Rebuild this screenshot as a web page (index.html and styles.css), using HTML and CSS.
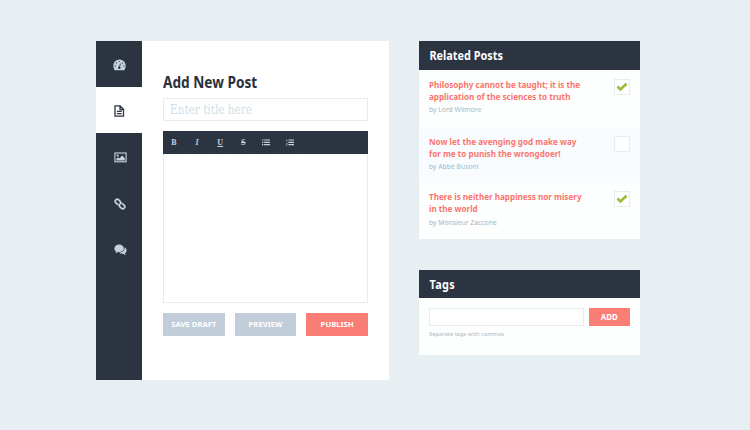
FILE: index.html
```
<!DOCTYPE html>
<html lang="en">
<head>
<meta charset="utf-8">
<title>Add New Post</title>
<link rel="stylesheet" href="styles.css">
</head>
<body>
<main class="page">
  <section class="composer">
    <nav class="sidebar">
      <a class="nav-item gauge">
        <svg width="13" height="12" viewBox="0 0 13 12"><path fill="currentColor" d="M6.500.4a6.200 6.200 0 0 0-6.200 6.200c0 1.700.5 3.200 1.300 4.600h9.800c.8-1.400 1.300-2.900 1.300-4.600A6.200 6.200 0 0 0 6.500.4z"/><g fill="#2d3441"><circle cx="2.200" cy="6.900" r=".6"/><circle cx="3.500" cy="3.900" r=".6"/><circle cx="6.400" cy="2.500" r=".6"/><circle cx="9.500" cy="3.900" r=".6"/><circle cx="10.800" cy="6.900" r=".6"/><circle cx="6.300" cy="8.700" r="1.200"/></g><path d="M6.300 8.700 7.400 4.600" stroke="#2d3441" stroke-width=".9"/></svg>
      </a>
      <a class="nav-item file active">
        <svg width="11" height="12" viewBox="0 0 11 12"><path fill="none" stroke="currentColor" stroke-width="1.300" d="M1 .9h5.200l3.300 3.300v6.900H1zM6 .9v3.600h3.500M2.900 6.400h4.800M2.900 8.600h4.800"/></svg>
      </a>
      <a class="nav-item">
        <svg width="13" height="11" viewBox="0 0 13 11"><rect x=".9" y="1" width="11.200" height="8.800" fill="none" stroke="currentColor" stroke-width="1.100"/><circle cx="3.600" cy="3.600" r="1.100" fill="currentColor"/><path fill="currentColor" d="M2.300 8.500V7l1.800-1.700 1.200 1.100 2.900-3 2.600 2.800v2.300z"/></svg>
      </a>
      <a class="nav-item">
        <svg width="12" height="12" viewBox="0 0 12 12"><g fill="none" stroke="currentColor" stroke-width="1.700" stroke-linecap="round" stroke-linejoin="round"><path d="M3.500 6.300 1.600 4.400a1.600 1.600 0 0 1 0-2.300l.5-.5a1.600 1.600 0 0 1 2.300 0l2 2a1.600 1.600 0 0 1 .1 2.200"/><path d="m8.500 5.700 1.900 1.900a1.600 1.600 0 0 1 0 2.300l-.5.5a1.600 1.600 0 0 1-2.300 0l-2-2a1.600 1.600 0 0 1-.1-2.200"/></g></svg>
      </a>
      <a class="nav-item">
        <svg width="13" height="12" viewBox="0 0 13 12"><path fill="currentColor" d="M5 .4C2.400.4.400 2.100.400 4.400c0 1.300.700 2.400 1.800 3-.100.600-.500 1.100-1 1.600 1.100-.100 2-.500 2.700-1.100 3.400.300 6-1.200 6-3.500C9.900 2.100 7.600.4 5 .4z"/><path fill="currentColor" d="M10.700 3.300c.3 3.100-2.200 5.100-5.600 5.300 1 1 2.600 1.300 4 1.100.8.700 1.700 1.100 2.800 1.200-.5-.5-.9-1-1-1.600 2.200-1.300 2.200-4.700-.2-6z"/></svg>
      </a>
    </nav>
    <div class="form">
      <h1>Add New Post</h1>
      <div class="title-input"><span>Enter title here</span></div>
      <div class="toolbar">
        <span class="tool">B</span>
        <span class="tool italic">I</span>
        <span class="tool underline">U</span>
        <span class="tool strike">S</span>
        <span class="tool"><svg width="8" height="7" viewBox="0 0 8 7"><path stroke="currentColor" stroke-width="1.200" d="M0 1h1.400M0 3.300h1.400M0 5.600h1.400M2.100 1H8M2.100 3.300H8M2.100 5.600H8"/></svg></span>
        <span class="tool"><svg width="8" height="7" viewBox="0 0 8 7"><path stroke="currentColor" stroke-width="1.200" d="M2.400 1H8M2.400 3.300H8M2.400 5.600H8"/><path fill="none" stroke="currentColor" stroke-width=".6" d="M.2.7h.6v2M.1 4.300h1.200L.3 6.200h1.200"/></svg></span>
      </div>
      <div class="editor"></div>
      <div class="actions">
        <button class="btn">SAVE DRAFT</button>
        <button class="btn">PREVIEW</button>
        <button class="btn primary">PUBLISH</button>
      </div>
    </div>
  </section>
  <aside class="side">
    <section class="card">
      <h2>Related Posts</h2>
      <article class="post">
        <div><h3>Philosophy cannot be taught; it is the<br>application of the sciences to truth</h3><p>by Lord Wilmore</p></div>
        <span class="check"><svg width="12" height="10" viewBox="0 0 12 10"><path fill="none" stroke="#9bbb35" stroke-width="2.600" d="m1.500 4.500 3 2.900 6-5.600"/></svg></span>
      </article>
      <article class="post alt">
        <div><h3>Now let the avenging god make way<br>for me to punish the wrongdoer!</h3><p>by Abbé Busoni</p></div>
        <span class="check"></span>
      </article>
      <article class="post last">
        <div><h3>There is neither happiness nor misery<br>in the world</h3><p>by Monsieur Zaccone</p></div>
        <span class="check"><svg width="12" height="10" viewBox="0 0 12 10"><path fill="none" stroke="#9bbb35" stroke-width="2.600" d="m1.500 4.500 3 2.900 6-5.600"/></svg></span>
      </article>
    </section>
    <section class="card tags">
      <h2><span class="tags-title">Tags</span></h2>
      <div class="tag-form">
        <div class="tag-input"></div>
        <button class="btn primary add">ADD</button>
      </div>
      <p class="hint">Separate tags with commas</p>
    </section>
  </aside>
</main>
</body>
</html>
```
FILE: styles.css
```
* { box-sizing: border-box; margin: 0; padding: 0; }
body {
  width: 750px;
  height: 430px;
  overflow: hidden;
  background: #e8eff3;
  font-family: "Noto Sans", sans-serif;
}
.page { display: flex; align-items: flex-start; gap: 30px; padding: 41px 0 0 96px; }
svg { display: block; }

.composer { display: flex; width: 293px; height: 339px; background: #fff; }
.sidebar { width: 46.400px; background: #2d3441; }
.nav-item {
  display: flex;
  align-items: center;
  justify-content: center;
  height: 46.200px;
  padding-left: 2px;
  padding-top: 2px;
  color: #c3d2de;
}
.nav-item.gauge { padding-left: 0; }
.nav-item.file { padding-left: 0; padding-top: 1px; }
.nav-item.active { background: #fff; color: #2d3441; }

.form { width: 225.600px; padding: 30px 0 0 20.600px; }
h1 {
  height: 27px;
  font-size: 16px;
  line-height: 23px;
  color: #2a2f3c;
  white-space: nowrap;
  transform: scaleX(.853);
  transform-origin: left;
}
.title-input {
  height: 23px;
  padding-left: 6px;
  border: 1px solid #e4edf1;
  font: 12px/22px "DejaVu Serif", serif;
  color: #cfdee6;
}
.title-input span {
  display: inline-block;
  white-space: nowrap;
  transform: scaleX(.873);
  transform-origin: left;
}
.toolbar {
  display: flex;
  height: 23px;
  margin-top: 10px;
  background: #2d3441;
  color: #c6d1dc;
}
.tool {
  display: flex;
  align-items: center;
  justify-content: center;
  width: 23.100px;
  font: bold 8px "Liberation Serif", serif;
  border-right: 1px solid #2f3744;
}
.italic { font-style: italic; }
.underline { text-decoration: underline; }
.strike { text-decoration: line-through; }
.editor { height: 149px; border: 1px solid #e4edf1; border-top: 0; }
.actions { display: flex; gap: 10px; margin-top: 10px; }
.btn {
  flex: 1;
  height: 23px;
  border: 0;
  background: #c1ceda;
  color: #fff;
  font: bold 7.700px/23px "Noto Sans", sans-serif;
  white-space: nowrap;
}
.btn.primary { background: #fb7e76; }

.side { width: 221px; }
.card { background: #fdfefe; }
h2 {
  height: 28.500px;
  padding-top: 1px;
  background: #2d3441;
  color: #fff;
  text-indent: 11.800px;
  font-size: 12.300px;
  line-height: 28px;
  width: 250px;
  transform: scaleX(.884);
  transform-origin: left;
}
.tags h2 { height: 28px; }
.tags-title { letter-spacing: .4px; }
.post {
  display: flex;
  justify-content: space-between;
  height: 57px;
  padding: 9px 10px 0;
}
.post h3 {
  font-size: 9.500px;
  line-height: 12.300px;
  color: #fb756e;
  white-space: nowrap;
  transform: scaleX(.854);
  transform-origin: left;
}
.post p {
  margin-top: 2px;
  font-size: 6.800px;
  line-height: 10px;
  color: #a5b6c3;
}
.post.alt { background: #f9fcff; height: 56px; }
.post.last { height: 56.500px; padding-top: 8.500px; }
.check {
  display: flex;
  align-items: center;
  justify-content: center;
  width: 16px;
  height: 16px;
  border: 1px solid #e4edf1;
  background: #fff;
}
.tags { margin-top: 30.700px; height: 85px; }
.tag-form { display: flex; gap: 5px; padding: 10px 10px 0; }
.tag-input { flex: 1; height: 18px; border: 1px solid #e4edf1; background: #fff; }
.btn.add { flex: none; width: 41.500px; height: 18px; font-size: 7.900px; line-height: 18px; }
.hint { padding: 4px 10px 0; font-size: 5.800px; line-height: 9px; color: #a9bac6; }
```
